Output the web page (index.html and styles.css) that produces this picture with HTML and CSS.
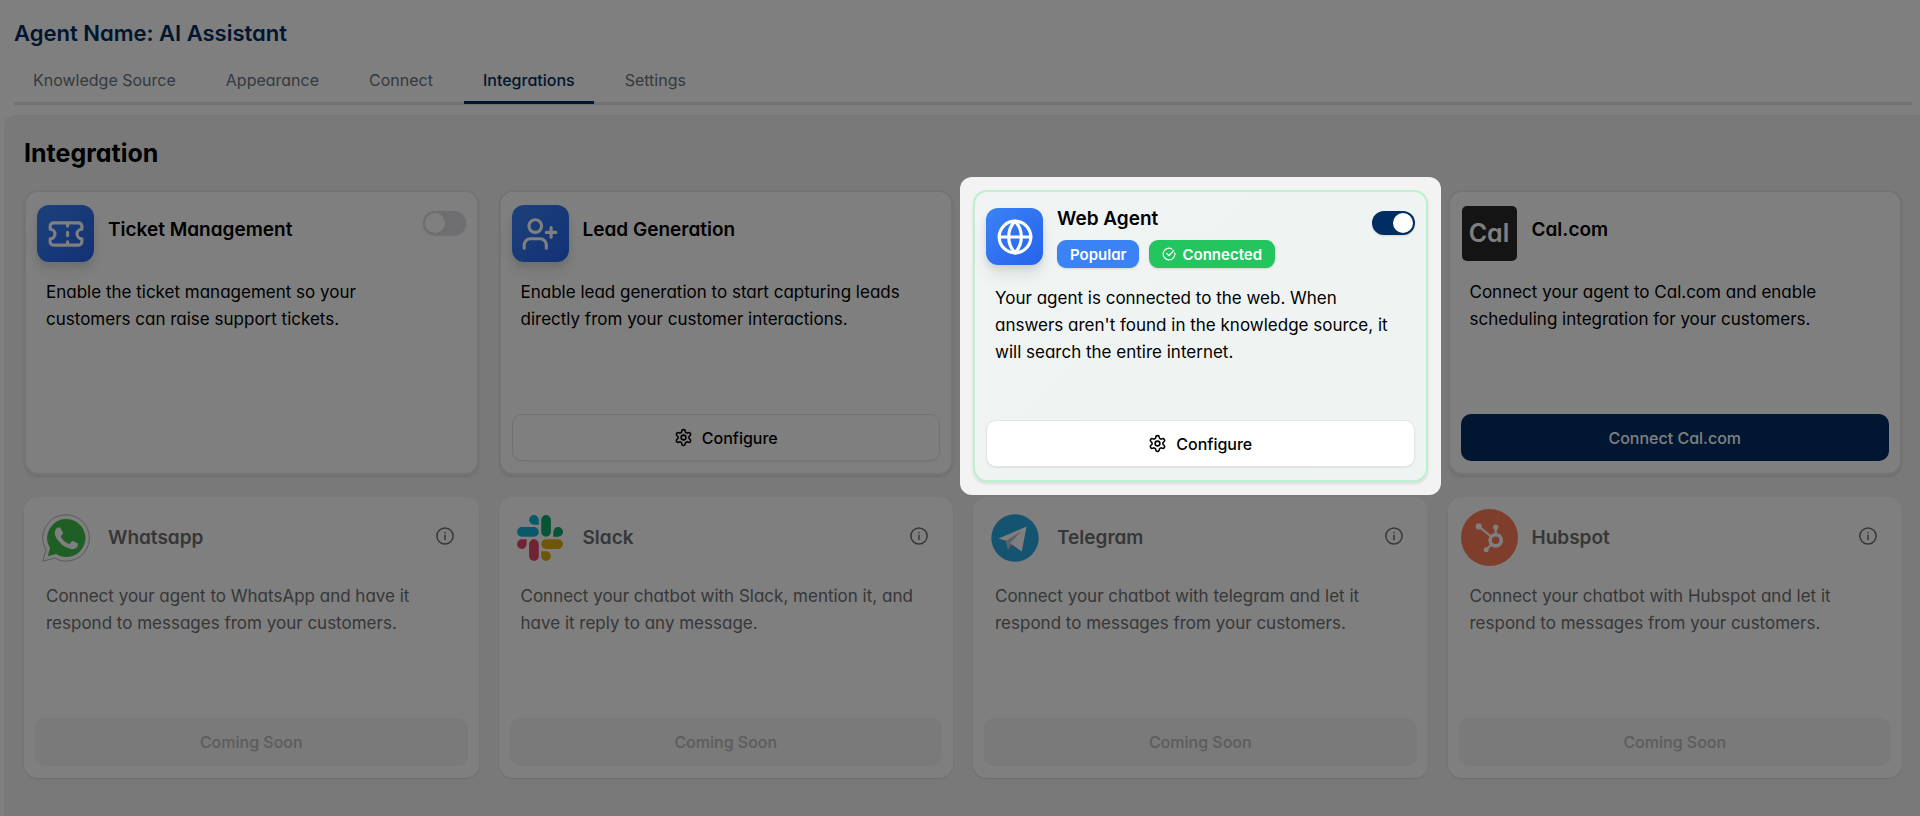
FILE: index.html
```html
<!DOCTYPE html>
<html lang="en">
<head>
<meta charset="utf-8">
<meta name="viewport" content="width=device-width, initial-scale=1">
<title>Agent Name: AI Assistant</title>
<link rel="stylesheet" href="styles.css">
</head>
<body>
<svg class="sprite" aria-hidden="true">
  <symbol id="gear" viewBox="0 0 24 24">
    <path d="M12.22 2h-.44a2 2 0 0 0-2 2v.18a2 2 0 0 1-1 1.73l-.43.25a2 2 0 0 1-2 0l-.15-.08a2 2 0 0 0-2.73.73l-.22.38a2 2 0 0 0 .73 2.73l.15.1a2 2 0 0 1 1 1.72v.51a2 2 0 0 1-1 1.74l-.15.09a2 2 0 0 0-.73 2.73l.22.38a2 2 0 0 0 2.73.73l.15-.08a2 2 0 0 1 2 0l.43.25a2 2 0 0 1 1 1.73V20a2 2 0 0 0 2 2h.44a2 2 0 0 0 2-2v-.18a2 2 0 0 1 1-1.73l.43-.25a2 2 0 0 1 2 0l.15.08a2 2 0 0 0 2.73-.73l.22-.39a2 2 0 0 0-.73-2.73l-.15-.08a2 2 0 0 1-1-1.74v-.5a2 2 0 0 1 1-1.74l.15-.09a2 2 0 0 0 .73-2.73l-.22-.38a2 2 0 0 0-2.73-.73l-.15.08a2 2 0 0 1-2 0l-.43-.25a2 2 0 0 1-1-1.73V4a2 2 0 0 0-2-2z"/>
    <circle cx="12" cy="12" r="3"/>
  </symbol>
  <symbol id="info" viewBox="0 0 24 24">
    <circle cx="12" cy="12" r="10.8"/>
    <path d="M12 11v5.5M12 7.4v.2"/>
  </symbol>
</svg>

<header class="top">
  <h1 class="agent">Agent Name: AI Assistant</h1>
  <nav class="tabs">
    <a class="tab" href="#">Knowledge Source</a>
    <a class="tab" href="#">Appearance</a>
    <a class="tab" href="#">Connect</a>
    <a class="tab tab-active" href="#" aria-current="page">Integrations</a>
    <a class="tab" href="#">Settings</a>
  </nav>
</header>

<main class="panel">
  <h2 class="heading">Integration</h2>
  <div class="grid">

    <article class="card">
      <div class="card-head">
        <span class="tile tile-blue">
          <svg class="glyph" viewBox="0 0 24 24"><path d="M2 9a3 3 0 0 1 0 6v2a2 2 0 0 0 2 2h16a2 2 0 0 0 2-2v-2a3 3 0 0 1 0-6V7a2 2 0 0 0-2-2H4a2 2 0 0 0-2 2ZM13 5v2M13 17v2M13 11v2"/></svg>
        </span>
        <div class="info"><h3 class="title">Ticket Management</h3><div class="badges"></div></div>
        <input class="switch" type="checkbox" role="switch" aria-label="Ticket Management">
      </div>
      <p class="desc">Enable the ticket management so your customers can raise support tickets.</p>
    </article>

    <article class="card">
      <div class="card-head">
        <span class="tile tile-blue">
          <svg class="glyph" viewBox="0 0 24 24"><path d="M16 21v-2a4 4 0 0 0-4-4H6a4 4 0 0 0-4 4v2M19 8v6M22 11h-6"/><circle cx="9" cy="7" r="4"/></svg>
        </span>
        <div class="info"><h3 class="title">Lead Generation</h3><div class="badges"></div></div>
      </div>
      <p class="desc">Enable lead generation to start capturing leads directly from your customer interactions.</p>
      <button class="btn btn-outline" type="button"><svg class="gear"><use href="#gear"/></svg>Configure</button>
    </article>

    <article class="card card-active">
      <div class="card-head">
        <span class="tile tile-blue">
          <svg class="glyph" viewBox="0 0 24 24"><circle cx="12" cy="12" r="10"/><path d="M12 2a14.5 14.5 0 0 0 0 20 14.5 14.5 0 0 0 0-20M2 12h20"/></svg>
        </span>
        <div class="info">
          <h3 class="title">Web Agent</h3>
          <div class="badges">
            <span class="badge badge-popular">Popular</span>
            <span class="badge badge-connected"><svg class="check" viewBox="0 0 24 24"><path d="M21.8 10A10 10 0 1 1 17 3.335M8 11l4 4L20 6"/></svg>Connected</span>
          </div>
        </div>
        <input class="switch" type="checkbox" role="switch" aria-label="Web Agent" checked>
      </div>
      <p class="desc">Your agent is connected to the web. When answers aren't found in the knowledge source, it will search the entire internet.</p>
      <button class="btn btn-outline" type="button"><svg class="gear"><use href="#gear"/></svg>Configure</button>
    </article>

    <article class="card">
      <div class="card-head">
        <span class="tile"><span class="cal">Cal</span></span>
        <div class="info"><h3 class="title">Cal.com</h3><div class="badges"></div></div>
      </div>
      <p class="desc">Connect your agent to Cal.com and enable scheduling integration for your customers.</p>
      <button class="btn btn-primary" type="button">Connect Cal.com</button>
    </article>

    <article class="card card-soon">
      <div class="card-head">
        <span class="tile">
          <svg class="brand" viewBox="0 0 48 48">
            <path d="M24 .8A23.2 23.2 0 0 0 4 35.7L.8 47.2l11.8-3.1A23.2 23.2 0 1 0 24 .8Z" fill="#fff" stroke="#b4b4bc" stroke-width="1"/>
            <path d="M24.300 5A19 19 0 0 0 8 34l-2.200 8.200 8.400-2.200A19 19 0 1 0 24.300 5Z" fill="#3fbf4d"/>
            <path d="M18.800 14.500c-.4-1-.9-1-1.300-1h-1.100c-.4 0-1 .1-1.600.8-.5.6-2 2-2 4.800s2 5.500 2.300 5.900c.3.4 4 6.300 9.800 8.600 4.800 1.900 5.800 1.500 6.900 1.400 1-.1 3.400-1.400 3.800-2.700.5-1.300.5-2.500.3-2.700-.1-.2-.5-.4-1.100-.7l-3.800-1.800c-.5-.2-.9-.3-1.300.3-.4.5-1.500 1.800-1.800 2.200-.3.4-.7.4-1.200.1-.6-.3-2.400-.9-4.600-2.800-1.700-1.500-2.800-3.400-3.200-3.900-.3-.6 0-.9.300-1.200l1.700-2c.3-.3.2-.7 0-1.100Z" fill="#fff"/>
          </svg>
        </span>
        <h3 class="title">Whatsapp</h3>
        <svg class="info-icon"><use href="#info"/></svg>
      </div>
      <p class="desc">Connect your agent to WhatsApp and have it respond to messages from your customers.</p>
      <button class="btn btn-soon" type="button" disabled>Coming Soon</button>
    </article>

    <article class="card card-soon">
      <div class="card-head">
        <span class="tile">
          <svg class="brand brand-slack" viewBox="0 0 24 24">
            <path fill="#e2466c" d="M5.042 15.165a2.528 2.528 0 0 1-2.52 2.523A2.528 2.528 0 0 1 0 15.165a2.527 2.527 0 0 1 2.522-2.52h2.52v2.52zM6.313 15.165a2.527 2.527 0 0 1 2.521-2.52 2.527 2.527 0 0 1 2.521 2.52v6.313A2.528 2.528 0 0 1 8.834 24a2.528 2.528 0 0 1-2.521-2.522v-6.313z"/>
            <path fill="#12b2da" d="M8.834 5.042a2.528 2.528 0 0 1-2.521-2.52A2.528 2.528 0 0 1 8.834 0a2.528 2.528 0 0 1 2.521 2.522v2.520H8.834zM8.834 6.313a2.528 2.528 0 0 1 2.521 2.521 2.528 2.528 0 0 1-2.521 2.521H2.522A2.528 2.528 0 0 1 0 8.834a2.528 2.528 0 0 1 2.522-2.521h6.312z"/>
            <path fill="#10a86c" d="M18.956 8.834a2.528 2.528 0 0 1 2.522-2.521A2.528 2.528 0 0 1 24 8.834a2.528 2.528 0 0 1-2.522 2.521h-2.522V8.834zM17.688 8.834a2.528 2.528 0 0 1-2.523 2.521 2.527 2.527 0 0 1-2.520-2.521V2.522A2.527 2.527 0 0 1 15.165 0a2.528 2.528 0 0 1 2.523 2.522v6.312z"/>
            <path fill="#e0ac10" d="M15.165 18.956a2.528 2.528 0 0 1 2.523 2.522A2.528 2.528 0 0 1 15.165 24a2.527 2.527 0 0 1-2.520-2.522v-2.522h2.520zM15.165 17.688a2.527 2.527 0 0 1-2.520-2.523 2.526 2.526 0 0 1 2.520-2.520h6.313A2.527 2.527 0 0 1 24 15.165a2.528 2.528 0 0 1-2.522 2.523h-6.313z"/>
          </svg>
        </span>
        <h3 class="title">Slack</h3>
        <svg class="info-icon"><use href="#info"/></svg>
      </div>
      <p class="desc">Connect your chatbot with Slack, mention it, and have it reply to any message.</p>
      <button class="btn btn-soon" type="button" disabled>Coming Soon</button>
    </article>

    <article class="card card-soon">
      <div class="card-head">
        <span class="tile">
          <svg class="brand" viewBox="0 0 48 48">
            <circle cx="24" cy="24" r="23.700" fill="#29a9e0"/>
            <path d="M7.500 24.500 35.600 12.600l-4.800 25-9.400-6.800-4.400 4.300-1.900-8.300Z" fill="#fff"/>
            <path d="m15.100 26.800 15.400-9.700-11.400 12.100-2.100 5.900Z" fill="#b9c6cf"/>
            <path d="m17 35.100 2.100-5.900 2.900 2.200Z" fill="#94a4ae"/>
          </svg>
        </span>
        <h3 class="title">Telegram</h3>
        <svg class="info-icon"><use href="#info"/></svg>
      </div>
      <p class="desc">Connect your chatbot with telegram and let it respond to messages from your customers.</p>
      <button class="btn btn-soon" type="button" disabled>Coming Soon</button>
    </article>

    <article class="card card-soon">
      <div class="card-head">
        <span class="tile">
          <svg class="brand brand-full" viewBox="0 0 57 57">
            <circle cx="28.500" cy="28.500" r="28.500" fill="#ff7a59"/>
            <g fill="none" stroke="#fff">
              <circle cx="34.700" cy="31.300" r="5.600" stroke-width="3.600"/>
              <path d="M34.700 26v-8M30 27.500 18 17.700M30.500 35.500l-5 5" stroke-width="2.200"/>
            </g>
            <g fill="#fff"><circle cx="34.700" cy="18.200" r="2.600"/><circle cx="17.800" cy="17.400" r="3.100"/><circle cx="25.200" cy="40.800" r="2.500"/></g>
          </svg>
        </span>
        <h3 class="title">Hubspot</h3>
        <svg class="info-icon"><use href="#info"/></svg>
      </div>
      <p class="desc">Connect your chatbot with Hubspot and let it respond to messages from your customers.</p>
      <button class="btn btn-soon" type="button" disabled>Coming Soon</button>
    </article>

  </div>
</main>
</body>
</html>
```

FILE: styles.css
```css
* { box-sizing: border-box; }

body {
  margin: 0;
  min-height: 100vh;
  display: flex;
  flex-direction: column;
  background: #fff;
  color: #000;
  font-family: Inter, "Open Sans", sans-serif;
  font-feature-settings: "cv11";
}

h1, h2, h3, p { margin: 0; }

.sprite { display: none; }

/* header and tabs */
.top { padding: 18px 8px 10px 14px; }

.agent {
  font-size: 22px;
  line-height: 30px;
  font-weight: 600;
  color: #002d62;
}

.tabs {
  display: flex;
  gap: 12px;
  margin-top: 12px;
  border-bottom: 3px solid #e4e4e4;
}

.tab {
  padding: 8px 19px 9px;
  margin-bottom: -2px;
  border-bottom: 3px solid transparent;
  font-size: 16px;
  line-height: 24px;
  color: #6b7280;
  text-decoration: none;
}

.tab-active {
  color: #002d62;
  font-weight: 500;
  border-bottom-color: #002d62;
}

/* panel and grid */
.panel {
  flex: 1;
  margin-left: 4px;
  padding: 20px 18px 38px 20px;
  border-radius: 10px 0 0 0;
  background: #f3f3f3;
}

.heading {
  font-size: 25px;
  line-height: 36px;
  font-weight: 700;
}

.grid {
  display: grid;
  grid-template-columns: repeat(4, minmax(0, 1fr));
  align-items: start;
  gap: 15px 20px;
  margin-top: 19px;
}

.card {
  position: relative;
  display: flex;
  flex-direction: column;
  gap: 16px;
  min-height: 285px;
  padding: 13px 11px 12px;
  border: 2px solid #e8e8e8;
  border-radius: 14px;
  background: #fff;
  box-shadow: 0 2px 3px #0000001a;
}

.card-head {
  display: flex;
  align-items: center;
  gap: 14px;
}

.title {
  flex: 1;
  font-size: 19px;
  line-height: 28px;
  font-weight: 600;
}

.info {
  flex: 1;
  display: grid;
  gap: 7px;
}

.badges { display: flex; gap: 10px; }

.badge {
  display: flex;
  align-items: center;
  gap: 6px;
  height: 28px;
  padding: 0 13px;
  border-radius: 9px;
  color: #fff;
  font-size: 15px;
  font-weight: 600;
  box-shadow: 0 1px 2px #0000001f;
}

.badge-popular { background: #3b82f6; }
.badge-connected { background: #22c55e; }

.check {
  width: 14px;
  height: 14px;
  fill: none;
  stroke: #fff;
  stroke-width: 2;
  stroke-linecap: round;
  stroke-linejoin: round;
}

.tile {
  flex: none;
  display: flex;
  align-items: center;
  justify-content: center;
  width: 57px;
  height: 57px;
}

.tile-blue {
  border-radius: 12px;
  background: linear-gradient(135deg, #3b82f6, #2563eb);
  box-shadow: 0 10px 15px #00000014, 0 4px 6px #00000014;
}

.glyph {
  width: 38px;
  height: 38px;
  fill: none;
  stroke: #fff;
  stroke-width: 2;
  stroke-linecap: round;
  stroke-linejoin: round;
}

.cal {
  width: 55px;
  height: 55px;
  border-radius: 5px;
  background: #292929;
  color: #fff;
  font-size: 25px;
  line-height: 55px;
  font-weight: 600;
  text-align: center;
}

.switch {
  appearance: none;
  align-self: flex-start;
  flex: none;
  width: 43px;
  height: 24px;
  margin: 6px 0 0;
  padding: 2px;
  border-radius: 12px;
  background: #dcdce0;
  box-shadow: 0 1px 2px #0000001f;
}

.switch::before {
  content: "";
  display: block;
  width: 20px;
  height: 20px;
  border-radius: 50%;
  background: #fff;
}

.switch:checked { background: #002d62; }
.switch:checked::before { margin-left: auto; }

.desc {
  min-height: 120px;
  padding: 1px 23px 0 9px;
  font-size: 17px;
  line-height: 27px;
}

.btn {
  display: flex;
  align-items: center;
  justify-content: center;
  gap: 9px;
  height: 47px;
  padding: 0;
  border: 0;
  border-radius: 10px;
  font: inherit;
  font-size: 16px;
  font-weight: 500;
}

.btn-outline {
  border: 1px solid #e2e4e8;
  background: #fff;
  color: #000;
  box-shadow: 0 1px 2px #00000012;
}

.btn-primary { background: #002d62; color: #fff; }

.gear {
  width: 19px;
  height: 19px;
  fill: none;
  stroke: currentColor;
  stroke-width: 2;
  stroke-linejoin: round;
}

/* highlighted card: everything outside its frame is dimmed */
.card-active {
  z-index: 1;
  padding-bottom: 13px;
  border-color: #bbf0d0;
  background: linear-gradient(135deg, #f0f4f4, #eef4f2);
}

.card-active::after {
  content: "";
  position: absolute;
  inset: -15px;
  border-radius: 12px;
  box-shadow: 0 0 0 9999px #00000080;
  pointer-events: none;
}

/* integrations that are not available yet */
.card-soon {
  min-height: 281px;
  padding: 12px 13px;
  border: 0;
  box-shadow: 0 1px 2px #0000001a;
}

.card-soon .title,
.card-soon .desc { color: #6e6e70; }

.brand { width: 48px; height: 48px; }
.brand-slack { width: 46px; height: 46px; }
.brand-full { width: 57px; height: 57px; }

.info-icon {
  width: 18px;
  height: 18px;
  margin: 0 12px 4px 0;
  overflow: visible;
  fill: none;
  stroke: #6e6e70;
  stroke-width: 2;
  stroke-linecap: round;
}

.btn-soon {
  height: 48px;
  margin: 0 -2px;
  background: #f4f4f4;
  color: #b9b9b9;
}
```
